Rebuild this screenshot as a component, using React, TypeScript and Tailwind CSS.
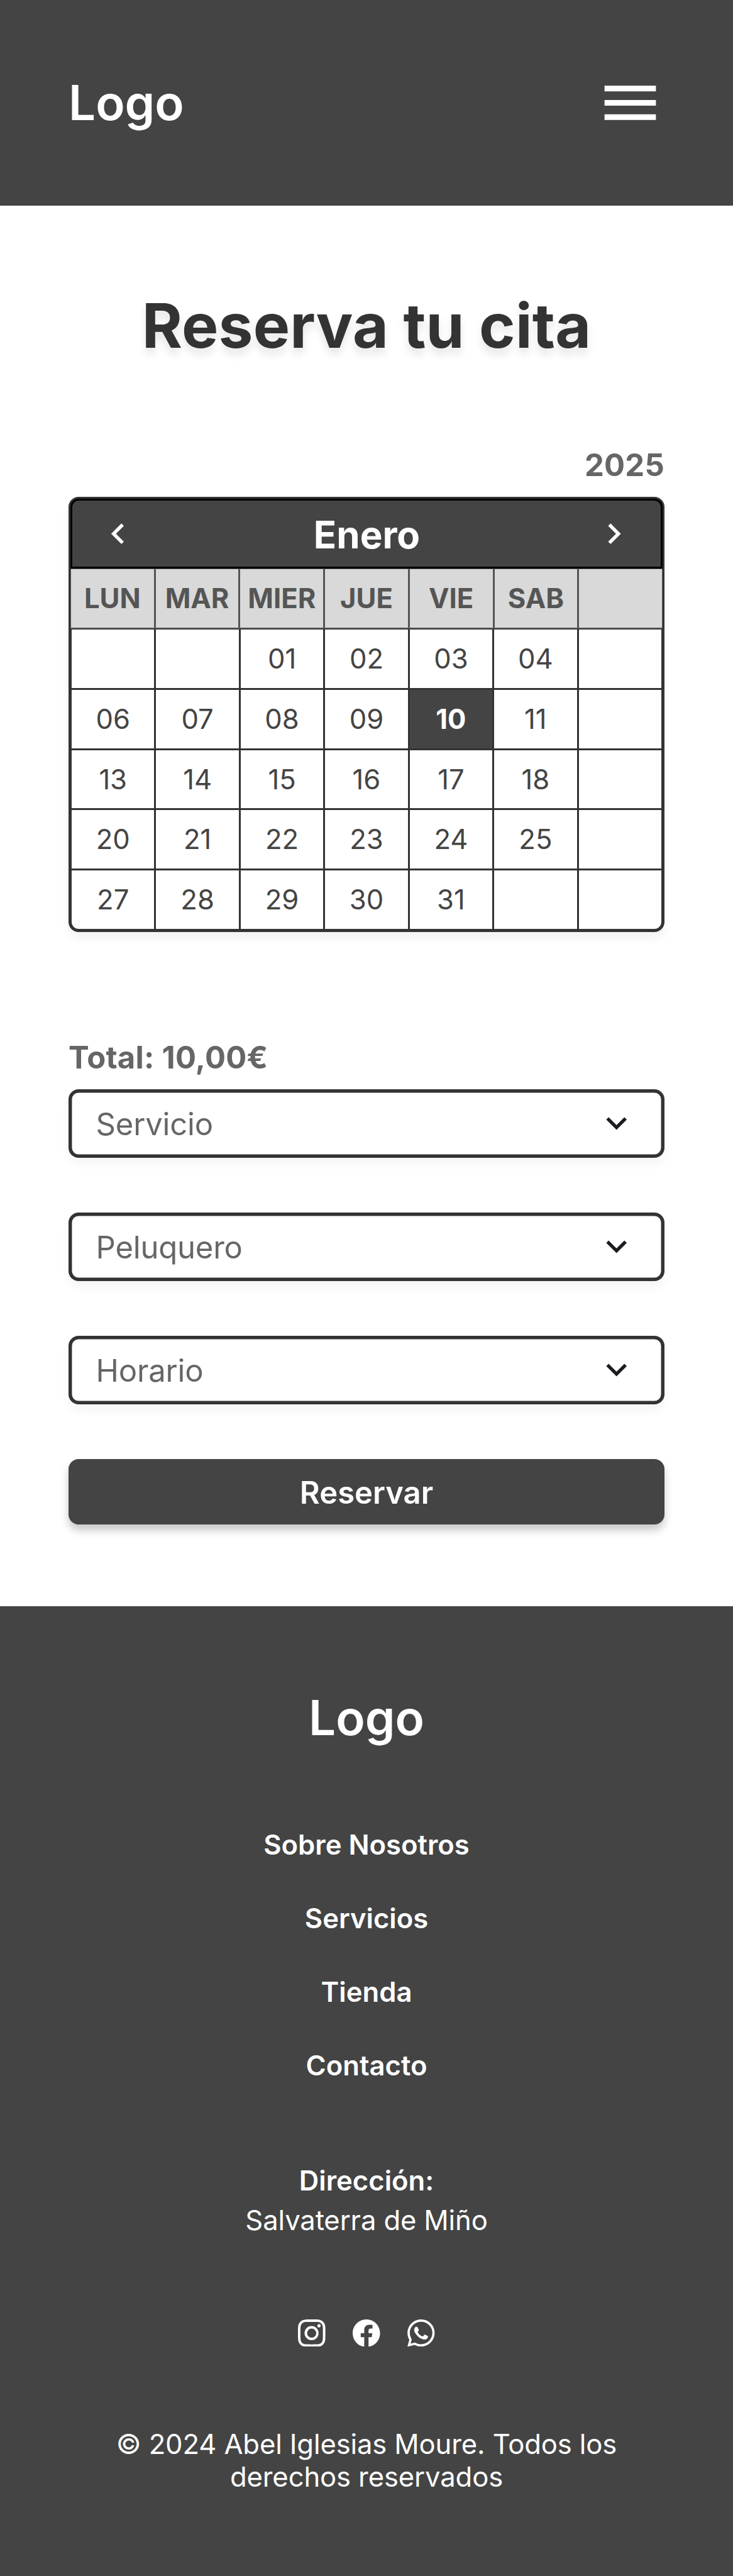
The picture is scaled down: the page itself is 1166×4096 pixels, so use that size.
import { BsFacebook, BsInstagram, BsWhatsapp } from "react-icons/bs";

const weekdays = ["LUN", "MAR", "MIER", "JUE", "VIE", "SAB", ""];
const weeks = [
  ["", "", "01", "02", "03", "04", ""],
  ["06", "07", "08", "09", "10", "11", ""],
  ["13", "14", "15", "16", "17", "18", ""],
  ["20", "21", "22", "23", "24", "25", ""],
  ["27", "28", "29", "30", "31", "", ""],
];
const links = ["Sobre Nosotros", "Servicios", "Tienda", "Contacto"];

function Chevron({ d, className }: { d: string; className: string }) {
  return (
    <svg viewBox="0 0 24 24" className={className} fill="currentColor">
      <path d={d} />
    </svg>
  );
}

function SelectField({ label }: { label: string }) {
  return (
    <button className="flex h-[109px] w-full items-center justify-between rounded-[16px] bg-white px-[43.6px] text-left text-[49px] leading-none font-normal tracking-[-0.2px] text-[#666] shadow-[inset_0_0_0_5.45px_#333,0_10px_16px_rgba(0,0,0,0.045)]">
      <span className="pt-[2px]">{label}</span>
      <Chevron className="mt-[-2px] size-[65.4px] text-[#1c1b1f]" d="M7.41 8.59 12 13.17l4.59-4.58L18 10l-6 6-6-6z" />
    </button>
  );
}

export default function App() {
  return (
    <div className="flex h-[4096px] w-[1166px] flex-col bg-white font-['Inter',sans-serif]">
      <header className="flex h-[327px] items-center justify-between bg-[#444] px-[109px] text-white">
        <span className="text-[76.3px] leading-none font-semibold">Logo</span>
        <svg viewBox="0 0 24 24" className="size-[109px]" fill="currentColor">
          <path d="M3 18h18v-2H3zm0-5h18v-2H3zm0-7v2h18V6z" />
        </svg>
      </header>

      <main className="flex h-[2227px] flex-col px-[109px]">
        <h1 className="mt-[131px] text-center text-[98px] leading-[120px] font-bold tracking-[0.2px] text-[#333] [text-shadow:0_10px_14px_rgba(0,0,0,0.1)]">
          Reserva tu cita
        </h1>
        <p className="mt-[132px] text-right text-[49px] leading-[60px] font-bold tracking-[0.25px] text-[#666]">2025</p>

        <section className="mt-[20px] flex h-[692px] flex-col rounded-[16px] bg-[#333] p-[3px] shadow-[0_10px_16px_rgba(0,0,0,0.05)]">
          <div className="flex h-[111px] items-center justify-between rounded-t-[13px] border-[3px] border-black bg-[#444] pr-[42px] pl-[40px] text-white">
            <Chevron className="size-[65.4px]" d="M15.41 7.41 14 6l-6 6 6 6 1.41-1.41L10.83 12z" />
            <span className="pt-[3px] pl-[3px] text-[60px] leading-none font-bold">Enero</span>
            <Chevron className="size-[65.4px]" d="M10 6 8.59 7.41 13.17 12l-4.58 4.59L10 18l6-6z" />
          </div>
          <div className="grid h-[96px] grid-cols-7 gap-[3px] bg-[#555] p-[1px] pb-[2px] text-[43.6px] leading-none font-bold text-[#555]">
            {weekdays.map((d, i) => (
              <div key={i} className="flex items-center justify-center bg-[#d9d9d9]">{d}</div>
            ))}
          </div>
          <div className="grid min-h-0 flex-1 grid-cols-7 grid-rows-5 gap-[3px] px-[2px] pt-px pb-[2px] text-[43.6px] leading-none font-normal text-[#444]">
            {weeks.flat().map((d, i) => (
              <div
                key={i}
                className={
                  d === "10"
                    ? "flex items-center justify-center bg-[#444] pt-px font-bold text-white"
                    : i === 28
                      ? "flex items-center justify-center rounded-bl-[11px] bg-white pt-px"
                      : i === 34
                        ? "flex items-center justify-center rounded-br-[11px] bg-white pt-px"
                        : "flex items-center justify-center bg-white pt-px"
                }
              >
                {d}
              </div>
            ))}
          </div>
        </section>

        <p className="mt-[170px] text-[49px] leading-[60px] font-bold tracking-[0.25px] text-[#666]">Total: 10,00€</p>
        <div className="mt-[20px] flex flex-col gap-[87px]">
          <SelectField label="Servicio" />
          <SelectField label="Peluquero" />
          <SelectField label="Horario" />
          <button className="flex h-[104px] w-full items-center justify-center rounded-[16px] bg-[#444] pt-[2px] text-[49px] leading-none font-semibold text-white shadow-[0_9px_14px_rgba(0,0,0,0.22)]">
            Reservar
          </button>
        </div>
      </main>

      <footer className="flex flex-1 flex-col items-center bg-[#444] text-[43.6px] text-white">
        <span className="mt-[131px] text-[76.3px] leading-[92px] font-semibold">Logo</span>
        <nav className="mt-[130px] flex flex-col items-center gap-[64px] font-semibold">
          {links.map((l) => (
            <a key={l} className="leading-[53px]">{l}</a>
          ))}
        </nav>
        <p className="mt-[130px] leading-[53px] font-semibold">Dirección:</p>
        <p className="mt-[10px] leading-[53px] font-normal tracking-[-0.13px]">Salvaterra de Miño</p>
        <div className="mt-[130.5px] flex gap-[43.6px]">
          <BsInstagram className="size-[43.6px]" />
          <BsFacebook className="size-[43.6px]" />
          <BsWhatsapp className="size-[43.6px]" />
        </div>
        <p className="mt-[129.5px] w-[948px] text-center leading-[52.5px] font-normal tracking-[-0.13px]">
          © 2024 Abel Iglesias Moure. Todos los
          <br />
          derechos reservados
        </p>
      </footer>
    </div>
  );
}
